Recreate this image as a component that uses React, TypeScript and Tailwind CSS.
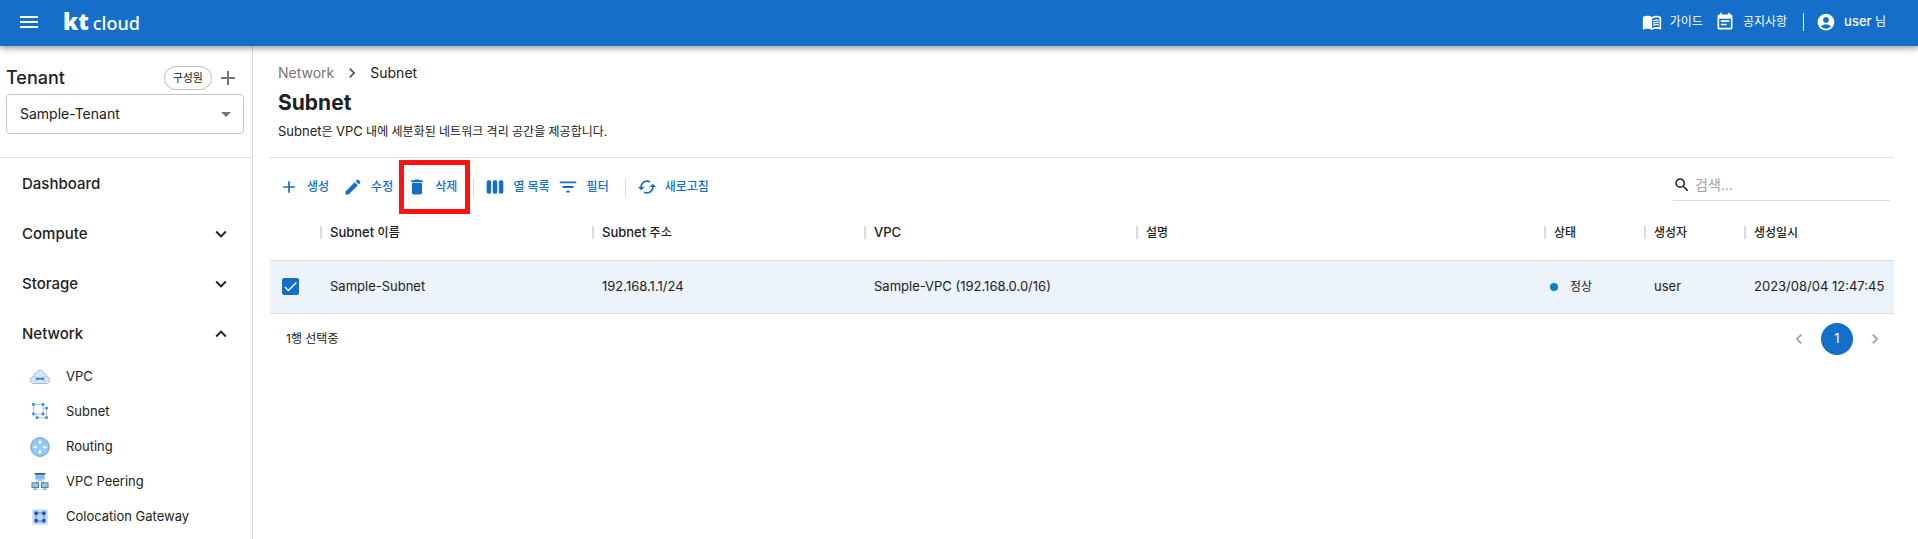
import type { ReactNode } from "react";
import { useState } from "react";
import type { IconType } from "react-icons";
import {
  MdAccountCircle,
  MdAdd,
  MdArrowDropDown,
  MdCached,
  MdCheck,
  MdChevronLeft,
  MdChevronRight,
  MdDelete,
  MdEdit,
  MdEventNote,
  MdExpandLess,
  MdExpandMore,
  MdFilterList,
  MdMenu,
  MdMenuBook,
  MdSearch,
  MdViewWeek,
} from "react-icons/md";

function VpcIcon() {
  return (
    <svg viewBox="0 0 20 20" className="size-5" aria-hidden="true">
      <path
        d="M4.2 16.6C2 16.6.5 15.2.5 13.2c0-1.8 1.2-3.2 2.8-3.4C3.3 7.6 4.7 6.2 6.4 6.2 7 4.4 8.4 3.4 10.1 3.400c2 0 3.500 1.200 4 3 1.700.2 2.800 1.500 2.800 3.300 1.600.3 2.600 1.700 2.600 3.400 0 2-1.500 3.500-3.500 3.500z"
        fill="#d6e9fa"
        stroke="#86b4dd"
        strokeWidth=".9"
      />
      <path d="M6 9.500v4.600M14 9.500v4.600" stroke="#5b94cf" strokeWidth=".9" />
      <path d="M7 11.800h6" stroke="#2f6fb4" strokeWidth="1.300" />
      <path d="M6.400 11.800 8.400 10v3.600zM13.600 11.800 11.600 10v3.600z" fill="#2f6fb4" />
    </svg>
  );
}

function SubnetIcon() {
  const nodes = [
    [3.5, 2.5],
    [13, 2.5],
    [3.5, 12],
    [13, 12],
    [16.5, 6.2],
    [16.5, 15.6],
    [7, 15.6],
  ];
  return (
    <svg viewBox="0 0 20 20" className="size-5" aria-hidden="true">
      <path
        d="M3.5 2.5H13V12H3.500zM13 6.200h3.500v9.400H7V12"
        fill="none"
        stroke="#bcbfc4"
        strokeWidth="1"
      />
      {nodes.map(([x, y]) => (
        <rect key={`${x}-${y}`} x={x - 1.4} y={y - 1.4} width="2.8" height="2.8" rx=".8" fill="#2f95f0" />
      ))}
    </svg>
  );
}

function RoutingIcon() {
  return (
    <svg viewBox="0 0 20 20" className="size-5" aria-hidden="true">
      <circle cx="10" cy="10" r="9.4" fill="#8fc6fb" stroke="#6e9fd0" strokeWidth=".9" />
      <g fill="#fff">
        <path d="M10 2.800 12.200 5.500H10.800V7.400H9.200V5.500H7.800z" />
        <path d="M10 17.200 12.200 14.500H10.800V12.600H9.200V14.500H7.800z" />
        <path d="M7.600 10 5.200 7.800V9.200H2.800V10.800H5.200V12.200z" />
        <path d="M12.400 10 14.800 7.800V9.200H17.200V10.800H14.800V12.200z" />
      </g>
    </svg>
  );
}

function PeeringIcon() {
  return (
    <svg viewBox="0 0 20 20" className="size-5" aria-hidden="true">
      <path d="M10 7.500 6 11M10 7.500l4 3.500" stroke="#9ccdf6" strokeWidth="1.600" />
      <rect x="5.300" y="2" width="9.400" height="5.600" fill="#7dbcf5" />
      <rect x="4.600" y="1" width="10.800" height="1.700" fill="#4c5a66" />
      <rect x="2" y="10.800" width="6.600" height="4.800" fill="#8fc8f4" stroke="#5d7587" />
      <rect x="11.400" y="10.800" width="6.600" height="4.800" fill="#8fc8f4" stroke="#5d7587" />
      <path d="M3.500 17.200h3.600M12.900 17.200h3.600" stroke="#5d7587" strokeWidth="1" />
    </svg>
  );
}

function ColocationIcon() {
  return (
    <svg viewBox="0 0 20 20" className="size-5" aria-hidden="true">
      <rect x="2.500" y="2.500" width="15" height="15" fill="#b4dafb" />
      <path d="M6 6h8v8H6z" fill="none" stroke="#5f7fd0" strokeWidth="1" />
      <g fill="#3347b0">
        <rect x="4.500" y="4.500" width="3.400" height="3.400" rx="1" />
        <rect x="12.100" y="4.500" width="3.400" height="3.400" rx="1" />
        <rect x="4.500" y="12.100" width="3.400" height="3.400" rx="1" />
        <rect x="12.100" y="12.100" width="3.400" height="3.400" rx="1" />
      </g>
    </svg>
  );
}

const sections = [
  { label: "Dashboard" },
  { label: "Compute", icon: MdExpandMore },
  { label: "Storage", icon: MdExpandMore },
  { label: "Network", icon: MdExpandLess },
];

const networkLinks = [
  { label: "VPC", Icon: VpcIcon },
  { label: "Subnet", Icon: SubnetIcon },
  { label: "Routing", Icon: RoutingIcon },
  { label: "VPC Peering", Icon: PeeringIcon },
  { label: "Colocation Gateway", Icon: ColocationIcon },
];

const columns = [
  { latin: "Subnet", korean: "이름" },
  { latin: "Subnet", korean: "주소" },
  { latin: "VPC" },
  { korean: "설명" },
  { korean: "상태" },
  { korean: "생성자" },
  { korean: "생성일시" },
];

function Header() {
  return (
    <header className="relative z-10 flex h-[46px] items-center bg-[#146eca] pr-8 pl-[17px] text-white shadow-[0_2px_4px_-1px_rgba(0,0,0,0.2),0_4px_5px_rgba(0,0,0,0.14),0_1px_10px_rgba(0,0,0,0.12)]">
      <button type="button" aria-label="메뉴" className="-mt-0.5">
        <MdMenu className="size-6" />
      </button>
      <a href="#" className="mb-0.5 ml-[22px] flex items-baseline gap-1 font-['Noto_Sans',sans-serif] leading-6">
        <span className="text-[23px] font-black">kt</span>
        <span className="text-lg leading-6 font-medium">cloud</span>
      </a>
      <nav className="ml-auto flex items-center pb-0.5 text-xs">
        <a href="#" className="flex items-center gap-2">
          <MdMenuBook className="size-5" />
          가이드
        </a>
        <a href="#" className="ml-3 flex items-center gap-2">
          <MdEventNote className="size-5" />
          공지사항
        </a>
        <span className="mx-3 ml-4 h-[18px] w-px bg-white" />
        <a href="#" className="flex items-center gap-2">
          <MdAccountCircle className="size-5" />
          <span>
            <span className="text-[13px] font-medium">user</span> 님
          </span>
        </a>
      </nav>
    </header>
  );
}

function Sidebar() {
  return (
    <aside className="w-[253px] shrink-0 border-r border-[#dcdcdc]">
      <div className="border-b border-[#dcdcdc] pt-5 pr-2 pb-[23px] pl-1.5">
        <div className="flex h-6 items-center">
          <label htmlFor="tenant" className="text-lg font-medium">
            Tenant
          </label>
          <button
            type="button"
            className="ml-auto h-6 rounded-full border border-[#bdbdbd] px-2 text-[11px] leading-none text-[#212121]"
          >
            구성원
          </button>
          <button type="button" aria-label="테넌트 추가" className="mr-1 ml-1 text-[#757575]">
            <MdAdd className="size-6" />
          </button>
        </div>
        <div className="relative mt-1">
          <select
            id="tenant"
            className="h-10 w-full appearance-none rounded border border-[#c4c4c4] bg-white px-[13px] text-sm"
          >
            <option>Sample-Tenant</option>
          </select>
          <MdArrowDropDown className="pointer-events-none absolute top-2 right-1.5 size-6 text-[#757575]" />
        </div>
      </div>
      <nav className="pt-px">
        {sections.map(({ label, icon: Icon }) => (
          <button
            key={label}
            type="button"
            className="flex h-[50px] w-full items-center justify-between pr-5 pl-[22px] text-[15px] font-medium"
          >
            {label}
            {Icon && <Icon className="size-[22px]" />}
          </button>
        ))}
        <ul>
          {networkLinks.map(({ label, Icon }) => (
            <li key={label}>
              <a href="#" className="flex h-[35px] items-center gap-4 pl-[30px] text-[13px]">
                <Icon />
                {label}
              </a>
            </li>
          ))}
        </ul>
      </nav>
    </aside>
  );
}

function ToolButton({
  icon: Icon,
  iconClass = "size-5",
  children,
}: {
  icon: IconType;
  iconClass?: string;
  children: ReactNode;
}) {
  return (
    <button
      type="button"
      className="flex h-[30px] items-center gap-2 px-[7px] text-xs font-medium whitespace-nowrap text-[#146eca]"
    >
      <Icon className={iconClass} />
      {children}
    </button>
  );
}

function ToolDivider() {
  return <span className="mr-1 ml-[9px] h-[19px] w-px bg-[#dcdcdc]" />;
}

function Toolbar() {
  return (
    <div className="flex h-[50px] items-center pt-2 pr-1 pl-0.5">
      <ToolButton icon={MdAdd}>생성</ToolButton>
      <ToolButton icon={MdEdit}>수정</ToolButton>
      <div className="relative">
        <ToolButton icon={MdDelete}>삭제</ToolButton>
        <span className="pointer-events-none absolute -top-3 -right-1.5 -bottom-3 -left-px border-5 border-[#ff1212]" />
      </div>
      <ToolDivider />
      <div className="flex -space-x-[7px]">
        <ToolButton icon={MdViewWeek}>열 목록</ToolButton>
        <ToolButton icon={MdFilterList} iconClass="size-[22px]">
          필터
        </ToolButton>
      </div>
      <ToolDivider />
      <ToolButton icon={MdCached}>새로고침</ToolButton>
      <label className="mb-1 ml-auto flex h-8 w-[217px] items-center border-b border-[#dcdcdc]">
        <MdSearch className="size-[18px] shrink-0" />
        <input
          type="search"
          aria-label="검색"
          placeholder="검색..."
          className="ml-1 w-full min-w-0 text-sm outline-none placeholder:text-[#a3a3a3]"
        />
      </label>
    </div>
  );
}

function SubnetTable() {
  const [selected, setSelected] = useState(true);
  return (
    <table className="w-full table-fixed border-collapse text-left text-[13px]">
      <colgroup>
        <col className="w-[50px]" />
        <col className="w-[272px]" />
        <col className="w-[272px]" />
        <col className="w-[272px]" />
        <col />
        <col className="w-[100px]" />
        <col className="w-[100px]" />
        <col className="w-[150px]" />
      </colgroup>
      <thead>
        <tr className="h-[52px]">
          <td />
          {columns.map(({ latin, korean }) => (
            <th key={`${latin}${korean}`} scope="col" className="p-0 pb-0.5 font-medium">
              <span className="flex items-center gap-2">
                <span className="h-[13px] w-0.5 bg-[#dcdcdc]" />
                <span>
                  {latin} {korean && <span className="text-xs">{korean}</span>}
                </span>
              </span>
            </th>
          ))}
        </tr>
      </thead>
      <tbody>
        <tr className="h-[53px] border-y border-[#d9dbde] bg-[#ecf3fb]">
          <td className="p-0 pl-3">
            <span className="grid size-[17px]">
              <input
                type="checkbox"
                aria-label="Sample-Subnet 선택"
                checked={selected}
                onChange={() => setSelected(!selected)}
                className="size-[17px] appearance-none rounded-xs border border-[#146eca] bg-white [grid-area:1/1] checked:bg-[#146eca]"
              />
              {selected && (
                <MdCheck className="pointer-events-none size-[17px] text-white [grid-area:1/1]" />
              )}
            </span>
          </td>
          <td className="px-2.5">Sample-Subnet</td>
          <td className="px-2.5">192.168.1.1/24</td>
          <td className="px-2.5">Sample-VPC (192.168.0.0/16)</td>
          <td />
          <td className="px-1.5">
            <span className="flex items-center gap-3 text-xs">
              <span className="size-2 rounded-full bg-[#0680d0]" />
              정상
            </span>
          </td>
          <td className="px-2.5">user</td>
          <td className="pl-2.5 whitespace-nowrap">2023/08/04 12:47:45</td>
        </tr>
      </tbody>
    </table>
  );
}

export default function App() {
  return (
    <div className="flex min-h-screen flex-col bg-white font-[Inter,'Noto_Sans_CJK_KR',sans-serif] text-[#212121]">
      <Header />
      <div className="flex grow">
        <Sidebar />
        <main className="min-w-0 grow pr-6 pl-[17px]">
          <div className="border-b border-[#dcdcdc] pt-4 pb-[15px] pl-2">
            <nav aria-label="경로" className="flex h-[22px] items-center text-sm">
              <a href="#" className="text-[#757575]">
                Network
              </a>
              <MdChevronRight className="mx-2 size-5 text-[#555]" />
              <span>Subnet</span>
            </nav>
            <h1 className="mt-[5px] text-[21px] leading-7 font-bold">Subnet</h1>
            <p className="mt-1 text-xs leading-5">
              <span className="text-[13px]">Subnet</span>은 <span className="text-[13px]">VPC</span> 내에
              세분화된 네트워크 격리 공간을 제공합니다.
            </p>
          </div>
          <Toolbar />
          <SubnetTable />
          <footer className="flex items-center justify-between py-[9px] pr-[9px] pl-4">
            <p className="text-xs">1행 선택중</p>
            <nav aria-label="페이지" className="flex items-center gap-3 text-[#9e9e9e]">
              <button type="button" aria-label="이전">
                <MdChevronLeft className="size-5" />
              </button>
              <button type="button" className="size-8 rounded-full bg-[#146eca] text-[13px] text-white">
                1
              </button>
              <button type="button" aria-label="다음">
                <MdChevronRight className="size-5" />
              </button>
            </nav>
          </footer>
        </main>
      </div>
    </div>
  );
}
